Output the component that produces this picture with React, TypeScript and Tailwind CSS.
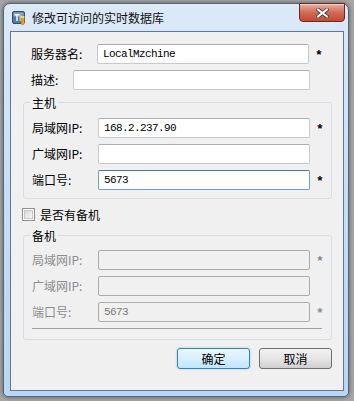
import React from 'react';

const cjk = { fontFamily: '"Noto Sans CJK SC", "Noto Sans", sans-serif' };
const mono = { fontFamily: '"Liberation Mono", "DejaVu Sans Mono", monospace' };

type FieldProps = {
  value?: string;
  width: string;
  focused?: boolean;
  disabled?: boolean;
};

const Field = ({ value = '', width, focused, disabled }: FieldProps) => {
  let tone = 'bg-white border-[#c5cad1] border-t-[#abadb3]';
  if (focused) tone = 'bg-white border-[#6b9fce] border-t-[#3d7bad]';
  if (disabled) tone = 'bg-[#f0f0f0] border-[#adadad]';
  return (
    <div
      className={`${width} h-[20px] shrink-0 rounded-[2px] border flex items-center pl-[5px] text-[11px] tracking-[-0.6px] ${tone} ${
        disabled ? 'text-[#7a7a7a]' : 'text-black'
      }`}
      style={mono}
    >
      {value}
    </div>
  );
};

const Star = ({ disabled }: { disabled?: boolean }) => (
  <span className={`ml-[6px] text-[13px] leading-none mt-[3px] font-bold ${disabled ? 'text-[#8a8a8a]' : 'text-black'}`} style={mono}>
    *
  </span>
);

const Row = ({
  label,
  value,
  focused,
  disabled,
  required,
}: {
  label: string;
  value?: string;
  focused?: boolean;
  disabled?: boolean;
  required?: boolean;
}) => (
  <div className="flex items-center h-[20px]">
    <span className={`w-[66px] shrink-0 text-[12px] leading-none ${disabled ? 'text-[#8d8d8d]' : 'text-black'}`}>{label}</span>
    <Field width="w-[212px]" value={value} focused={focused} disabled={disabled} />
    {required && <Star disabled={disabled} />}
  </div>
);

const Group = ({ title, className, children }: { title: string; className: string; children: React.ReactNode }) => (
  <div className={`relative ml-[12px] w-[309px] border border-[#d5dfe5] rounded-[3px] ${className}`}>
    <span className="absolute left-[6px] top-[-7px] px-[2px] bg-[#f0f0f0] text-[12px] leading-[14px] text-black">{title}</span>
    {children}
  </div>
);

const AppIcon = () => (
  <svg width="14" height="14" viewBox="0 0 14 14" className="shrink-0 mt-[7px]">
    <rect x="0.5" y="0.5" width="12" height="12" rx="1.5" fill="#5079a8" stroke="#2d4f78" />
    <rect x="1.5" y="1.5" width="10" height="4" fill="#7fa3cc" />
    <rect x="2.5" y="3" width="5" height="1.4" fill="#fff" />
    <rect x="4.3" y="3" width="1.4" height="7" fill="#fff" />
    <rect x="7.6" y="4.5" width="1.2" height="5.5" fill="#dbe6f3" />
    <rect x="9.2" y="6" width="3" height="7.5" rx="1" fill="#f2a81d" stroke="#b66c0a" strokeWidth="0.6" />
    <rect x="9" y="5" width="3.4" height="2" fill="#ffd24a" />
  </svg>
);

const CloseButton = () => (
  <div className="w-[46px] h-[19px] -mt-[1px] rounded-b-[4px] border border-[#6b2a1f] bg-gradient-to-b from-[#e8b0a4] via-[#d06a55] to-[#c34a33] flex items-center justify-center shadow-[inset_0_1px_0_rgba(255,255,255,0.5)]">
    <svg width="13" height="10" viewBox="0 0 13 10">
      <path d="M2 1.5 L11 8.5 M11 1.5 L2 8.5" stroke="#3b3b3b" strokeWidth="3.6" strokeLinecap="square" />
      <path d="M2 1.5 L11 8.5 M11 1.5 L2 8.5" stroke="#ffffff" strokeWidth="2" strokeLinecap="square" />
    </svg>
  </div>
);

export default function App() {
  return (
    <div className="w-[354px] h-[401px] overflow-hidden bg-[#a6a6a6] pt-[3px] pl-[3px]" style={cjk}>
      <div className="w-[346px] h-[394px] flex flex-col border border-[#55657a] rounded-t-[7px] rounded-b-[5px] bg-gradient-to-b from-[#dce9f7] via-[#c7def6] to-[#b9d6f4] shadow-[0_0_4px_rgba(0,0,0,0.5)]">
        {/* title bar */}
        <div className="h-[27px] shrink-0 flex items-start pl-[8px] pr-[3px]">
          <AppIcon />
          <span className="ml-[6px] mt-[7px] text-[12px] leading-[14px] text-[#111]">修改可访问的实时数据库</span>
          <div className="ml-auto">
            <CloseButton />
          </div>
        </div>

        {/* client area */}
        <div className="ml-[6px] mr-[4px] mb-[5px] flex-1 border border-[#5e7896] bg-[#f0f0f0] flex flex-col text-black">
          <div className="mt-[12px] ml-[20px] flex items-center h-[20px]">
            <span className="w-[66px] text-[12px] leading-none">服务器名:</span>
            <Field width="w-[212px]" value="LocalMzchine" />
            <Star />
          </div>
          <div className="mt-[6px] ml-[20px] flex items-center h-[20px]">
            <span className="w-[42px] text-[12px] leading-none">描述:</span>
            <Field width="w-[237px]" />
          </div>

          <Group title="主机" className="mt-[12px] pt-[15px] pb-[8px] pl-[8px]">
            <div className="flex flex-col gap-[6px]">
              <Row label="局域网IP:" value="168.2.237.90" required />
              <Row label="广域网IP:" />
              <Row label="端口号:" value="5673" focused required />
            </div>
          </Group>

          <label className="mt-[9px] ml-[11px] flex items-center h-[13px]">
            <span className="w-[13px] h-[13px] border border-[#8e8f8f] bg-white p-[1px]">
              <span className="block w-full h-full border border-[#c9c9c9] bg-gradient-to-br from-[#d8d8d8] to-[#fafafa]" />
            </span>
            <span className="ml-[5px] text-[12px] leading-none">是否有备机</span>
          </label>

          <Group title="备机" className="mt-[14px] pt-[14px] pb-[10px] pl-[8px]">
            <div className="flex flex-col gap-[6px]">
              <Row label="局域网IP:" disabled required />
              <Row label="广域网IP:" disabled />
              <Row label="端口号:" value="5673" disabled required />
            </div>
            <div className="mt-[6px] w-[290px] h-px bg-[#a0a0a0]" />
          </Group>

          <div className="mt-[8px] mr-[11px] flex justify-end gap-[9px]">
            <button className="w-[73px] h-[21px] rounded-[3px] border border-[#3c7fb1] bg-gradient-to-b from-[#eaf6fd] via-[#d9f0fc] to-[#bee6fd] text-[12px] leading-none shadow-[0_0_2px_#7fc4ee]">
              确定
            </button>
            <button className="w-[73px] h-[21px] rounded-[3px] border border-[#707070] bg-gradient-to-b from-[#f2f2f2] via-[#e6e6e6] to-[#cfcfcf] text-[12px] leading-none">
              取消
            </button>
          </div>
        </div>
      </div>
    </div>
  );
}
